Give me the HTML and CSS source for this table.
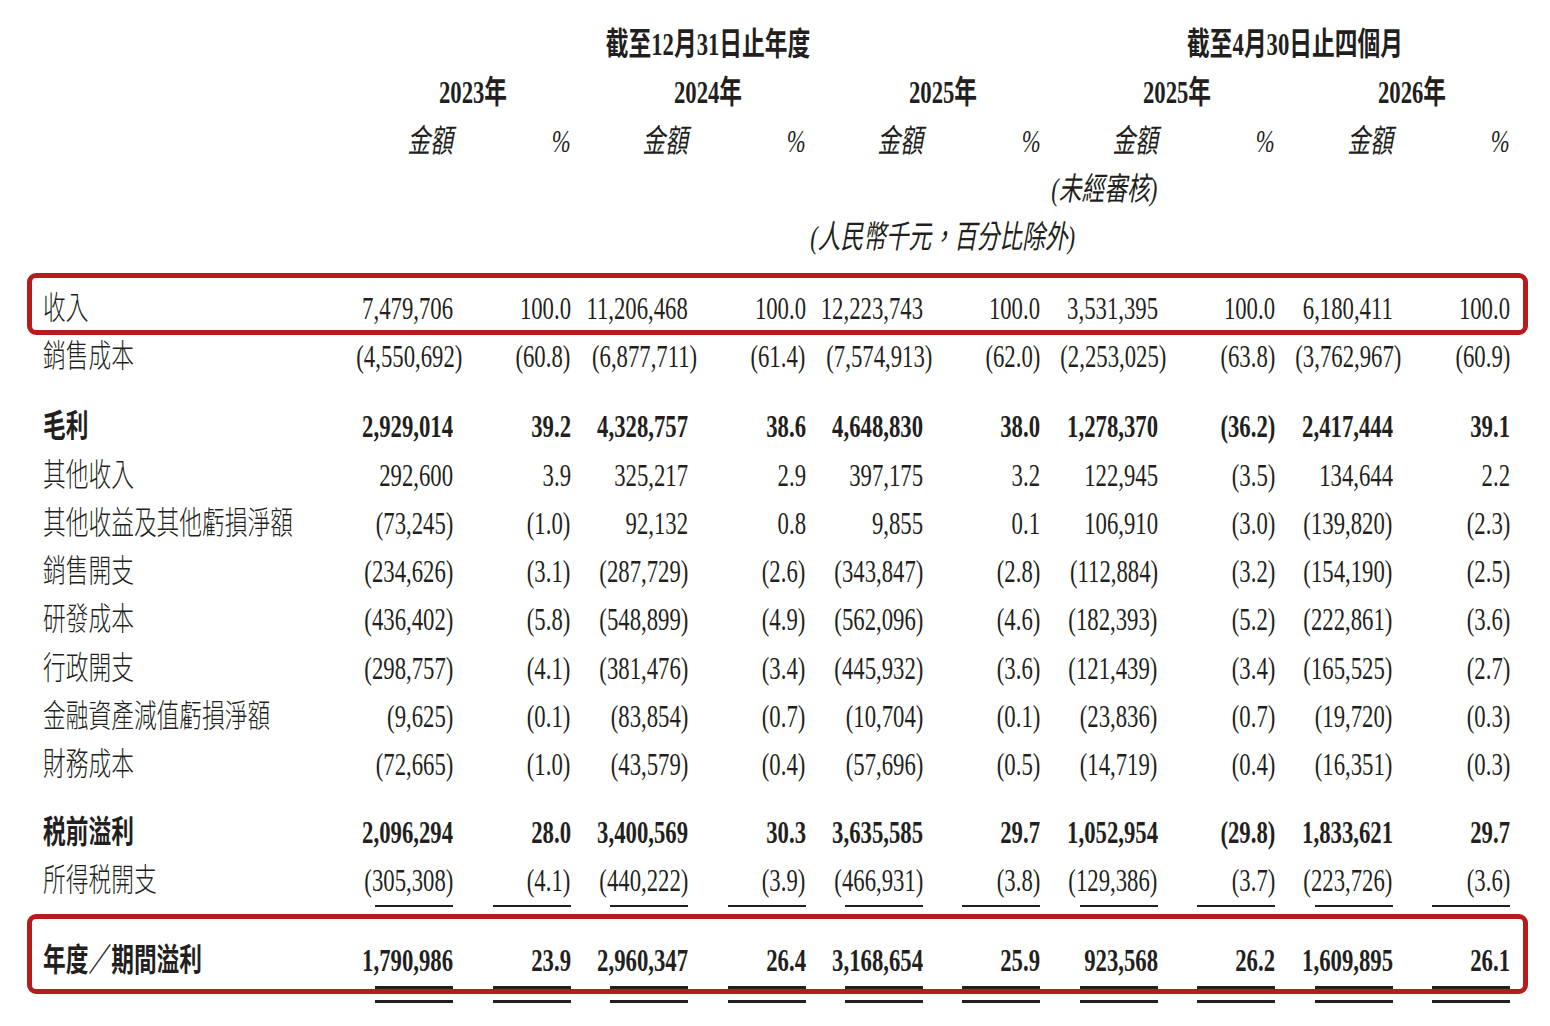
FILE: index.html
```html
<!DOCTYPE html>
<html lang="zh-Hant">
<head>
<meta charset="utf-8">
<title>收益表</title>
<link rel="stylesheet" href="styles.css">
</head>
<body>
<div class="sheet">
  <div class="row hd b">
    <div class="ctr g1"><span class="s">截至12月31日止年度</span></div>
    <div class="ctr g2"><span class="s">截至4月30日止四個月</span></div>
  </div>
  <div class="row hd b">
    <div class="ctr y1"><span class="s">2023年</span></div>
    <div class="ctr y2"><span class="s">2024年</span></div>
    <div class="ctr y3"><span class="s">2025年</span></div>
    <div class="ctr y4"><span class="s">2025年</span></div>
    <div class="ctr y5"><span class="s">2026年</span></div>
  </div>
  <div class="row hd it">
    <div class="lbl"></div>
    <div class="v"><span class="s">金額</span></div><div class="v"><span class="s">%</span></div>
    <div class="v"><span class="s">金額</span></div><div class="v"><span class="s">%</span></div>
    <div class="v"><span class="s">金額</span></div><div class="v"><span class="s">%</span></div>
    <div class="v"><span class="s">金額</span></div><div class="v"><span class="s">%</span></div>
    <div class="v"><span class="s">金額</span></div><div class="v"><span class="s">%</span></div>
  </div>
  <div class="row hd it">
    <div class="v c8"><span class="s">(未經審核)</span></div>
  </div>
  <div class="row hd it">
    <div class="ctr all"><span class="s">(人民幣千元，百分比除外)</span></div>
  </div>

  <div class="row hl hl1">
    <div class="lbl"><span class="s">收入</span></div>
    <div class="v"><span class="s">7,479,706</span></div><div class="v"><span class="s">100.0</span></div>
    <div class="v"><span class="s">11,206,468</span></div><div class="v"><span class="s">100.0</span></div>
    <div class="v"><span class="s">12,223,743</span></div><div class="v"><span class="s">100.0</span></div>
    <div class="v"><span class="s">3,531,395</span></div><div class="v"><span class="s">100.0</span></div>
    <div class="v"><span class="s">6,180,411</span></div><div class="v"><span class="s">100.0</span></div>
  </div>
  <div class="row after-hl">
    <div class="lbl"><span class="s">銷售成本</span></div>
    <div class="v hang"><span class="s">(4,550,692)</span></div><div class="v"><span class="s">(60.8)</span></div>
    <div class="v hang"><span class="s">(6,877,711)</span></div><div class="v"><span class="s">(61.4)</span></div>
    <div class="v hang"><span class="s">(7,574,913)</span></div><div class="v"><span class="s">(62.0)</span></div>
    <div class="v hang"><span class="s">(2,253,025)</span></div><div class="v"><span class="s">(63.8)</span></div>
    <div class="v hang"><span class="s">(3,762,967)</span></div><div class="v"><span class="s">(60.9)</span></div>
  </div>
  <div class="row b gap1">
    <div class="lbl"><span class="s">毛利</span></div>
    <div class="v"><span class="s">2,929,014</span></div><div class="v"><span class="s">39.2</span></div>
    <div class="v"><span class="s">4,328,757</span></div><div class="v"><span class="s">38.6</span></div>
    <div class="v"><span class="s">4,648,830</span></div><div class="v"><span class="s">38.0</span></div>
    <div class="v"><span class="s">1,278,370</span></div><div class="v"><span class="s">(36.2)</span></div>
    <div class="v"><span class="s">2,417,444</span></div><div class="v"><span class="s">39.1</span></div>
  </div>
  <div class="row">
    <div class="lbl"><span class="s">其他收入</span></div>
    <div class="v"><span class="s">292,600</span></div><div class="v"><span class="s">3.9</span></div>
    <div class="v"><span class="s">325,217</span></div><div class="v"><span class="s">2.9</span></div>
    <div class="v"><span class="s">397,175</span></div><div class="v"><span class="s">3.2</span></div>
    <div class="v"><span class="s">122,945</span></div><div class="v"><span class="s">(3.5)</span></div>
    <div class="v"><span class="s">134,644</span></div><div class="v"><span class="s">2.2</span></div>
  </div>
  <div class="row">
    <div class="lbl"><span class="s">其他收益及其他虧損淨額</span></div>
    <div class="v"><span class="s">(73,245)</span></div><div class="v"><span class="s">(1.0)</span></div>
    <div class="v"><span class="s">92,132</span></div><div class="v"><span class="s">0.8</span></div>
    <div class="v"><span class="s">9,855</span></div><div class="v"><span class="s">0.1</span></div>
    <div class="v"><span class="s">106,910</span></div><div class="v"><span class="s">(3.0)</span></div>
    <div class="v"><span class="s">(139,820)</span></div><div class="v"><span class="s">(2.3)</span></div>
  </div>
  <div class="row">
    <div class="lbl"><span class="s">銷售開支</span></div>
    <div class="v"><span class="s">(234,626)</span></div><div class="v"><span class="s">(3.1)</span></div>
    <div class="v"><span class="s">(287,729)</span></div><div class="v"><span class="s">(2.6)</span></div>
    <div class="v"><span class="s">(343,847)</span></div><div class="v"><span class="s">(2.8)</span></div>
    <div class="v"><span class="s">(112,884)</span></div><div class="v"><span class="s">(3.2)</span></div>
    <div class="v"><span class="s">(154,190)</span></div><div class="v"><span class="s">(2.5)</span></div>
  </div>
  <div class="row">
    <div class="lbl"><span class="s">研發成本</span></div>
    <div class="v"><span class="s">(436,402)</span></div><div class="v"><span class="s">(5.8)</span></div>
    <div class="v"><span class="s">(548,899)</span></div><div class="v"><span class="s">(4.9)</span></div>
    <div class="v"><span class="s">(562,096)</span></div><div class="v"><span class="s">(4.6)</span></div>
    <div class="v"><span class="s">(182,393)</span></div><div class="v"><span class="s">(5.2)</span></div>
    <div class="v"><span class="s">(222,861)</span></div><div class="v"><span class="s">(3.6)</span></div>
  </div>
  <div class="row">
    <div class="lbl"><span class="s">行政開支</span></div>
    <div class="v"><span class="s">(298,757)</span></div><div class="v"><span class="s">(4.1)</span></div>
    <div class="v"><span class="s">(381,476)</span></div><div class="v"><span class="s">(3.4)</span></div>
    <div class="v"><span class="s">(445,932)</span></div><div class="v"><span class="s">(3.6)</span></div>
    <div class="v"><span class="s">(121,439)</span></div><div class="v"><span class="s">(3.4)</span></div>
    <div class="v"><span class="s">(165,525)</span></div><div class="v"><span class="s">(2.7)</span></div>
  </div>
  <div class="row">
    <div class="lbl"><span class="s">金融資產減值虧損淨額</span></div>
    <div class="v"><span class="s">(9,625)</span></div><div class="v"><span class="s">(0.1)</span></div>
    <div class="v"><span class="s">(83,854)</span></div><div class="v"><span class="s">(0.7)</span></div>
    <div class="v"><span class="s">(10,704)</span></div><div class="v"><span class="s">(0.1)</span></div>
    <div class="v"><span class="s">(23,836)</span></div><div class="v"><span class="s">(0.7)</span></div>
    <div class="v"><span class="s">(19,720)</span></div><div class="v"><span class="s">(0.3)</span></div>
  </div>
  <div class="row">
    <div class="lbl"><span class="s">財務成本</span></div>
    <div class="v"><span class="s">(72,665)</span></div><div class="v"><span class="s">(1.0)</span></div>
    <div class="v"><span class="s">(43,579)</span></div><div class="v"><span class="s">(0.4)</span></div>
    <div class="v"><span class="s">(57,696)</span></div><div class="v"><span class="s">(0.5)</span></div>
    <div class="v"><span class="s">(14,719)</span></div><div class="v"><span class="s">(0.4)</span></div>
    <div class="v"><span class="s">(16,351)</span></div><div class="v"><span class="s">(0.3)</span></div>
  </div>
  <div class="row b gap2">
    <div class="lbl"><span class="s">税前溢利</span></div>
    <div class="v"><span class="s">2,096,294</span></div><div class="v"><span class="s">28.0</span></div>
    <div class="v"><span class="s">3,400,569</span></div><div class="v"><span class="s">30.3</span></div>
    <div class="v"><span class="s">3,635,585</span></div><div class="v"><span class="s">29.7</span></div>
    <div class="v"><span class="s">1,052,954</span></div><div class="v"><span class="s">(29.8)</span></div>
    <div class="v"><span class="s">1,833,621</span></div><div class="v"><span class="s">29.7</span></div>
  </div>
  <div class="row">
    <div class="lbl"><span class="s">所得税開支</span></div>
    <div class="v u"><span class="s">(305,308)</span></div><div class="v u"><span class="s">(4.1)</span></div>
    <div class="v u"><span class="s">(440,222)</span></div><div class="v u"><span class="s">(3.9)</span></div>
    <div class="v u"><span class="s">(466,931)</span></div><div class="v u"><span class="s">(3.8)</span></div>
    <div class="v u"><span class="s">(129,386)</span></div><div class="v u"><span class="s">(3.7)</span></div>
    <div class="v u"><span class="s">(223,726)</span></div><div class="v u"><span class="s">(3.6)</span></div>
  </div>
  <div class="row hl hl2 b">
    <div class="lbl"><span class="s">年度／期間溢利</span></div>
    <div class="v u3"><span class="s">1,790,986</span></div><div class="v u3"><span class="s">23.9</span></div>
    <div class="v u3"><span class="s">2,960,347</span></div><div class="v u3"><span class="s">26.4</span></div>
    <div class="v u3"><span class="s">3,168,654</span></div><div class="v u3"><span class="s">25.9</span></div>
    <div class="v u3"><span class="s">923,568</span></div><div class="v u3"><span class="s">26.2</span></div>
    <div class="v u3"><span class="s">1,609,895</span></div><div class="v u3"><span class="s">26.1</span></div>
  </div>
  <div class="row rule">
    <div class="blank"></div>
    <div class="bar"></div><div class="bar"></div><div class="bar"></div><div class="bar"></div><div class="bar"></div>
    <div class="bar"></div><div class="bar"></div><div class="bar"></div><div class="bar"></div><div class="bar"></div>
  </div>
</div>
</body>
</html>
```

FILE: styles.css
```css
* { box-sizing: border-box; }

html, body {
  margin: 0;
  background: #ffffff;
}

body {
  color: #231f20;
  font-family: "Liberation Serif", "Noto Sans CJK TC", serif;
  font-size: 32px;
  font-weight: 400;
}

.sheet {
  width: 1550px;
  height: 1026px;
  padding: 20px 0 0 43px;
  overflow: hidden;
}

.row {
  display: grid;
  grid-template-columns: 293px repeat(10, 117.4px);
  width: 1467px;
  line-height: 48.3px;
}

.s {
  display: block;
  flex-shrink: 0;
  white-space: nowrap;
  transform: scaleX(0.71);
}

.lbl {
  display: flex;
  font-weight: 300;
}
.lbl .s { transform-origin: left center; }

.v {
  display: flex;
  justify-content: flex-end;
}
.v .s { transform-origin: right center; }

.ctr {
  display: flex;
  justify-content: center;
  padding-left: 39.4px;
}
.ctr .s { transform-origin: center center; }

.b, .b .lbl { font-weight: 700; }
.it { font-style: italic; }

/* header spans */
.g1 { grid-column: 2 / 8; }
.g2 { grid-column: 8 / 12; }
.y1 { grid-column: 2 / 4; }
.y2 { grid-column: 4 / 6; }
.y3 { grid-column: 6 / 8; }
.y4 { grid-column: 8 / 10; }
.y5 { grid-column: 10 / 12; }
.c8 { grid-column: 8 / 9; }
.all { grid-column: 2 / 12; }

/* closing parenthesis hangs past the column edge */
.hang .s { margin-right: -9px; }

/* spacing between blocks */
.gap1 { margin-top: 22px; }
.gap2 { margin-top: 19.5px; }
.after-hl { margin-top: -3px; }

/* red highlight boxes */
.hl {
  width: 1501px;
  margin-left: -16px;
  margin-right: -18px;
  padding: 0 13px 0 11px;
  border: 5px solid #b71c1c;
  border-radius: 9px;
}
.hl1 {
  margin-top: 11.5px;
  padding-top: 8px;
  line-height: 44px;
}
.hl2 {
  margin-top: 7.3px;
  padding-top: 17px;
  line-height: 48px;
}

/* underlines */
.u {
  justify-self: end;
  width: 78px;
  border-bottom: 2px solid #231f20;
}
.u3 {
  justify-self: end;
  width: 78px;
  padding-bottom: 2px;
  border-bottom: 3px solid #231f20;
}

.rule {
  margin-top: 6px;
  line-height: 3px;
}
.bar {
  justify-self: end;
  width: 78px;
  height: 3px;
  background: #231f20;
}
```
